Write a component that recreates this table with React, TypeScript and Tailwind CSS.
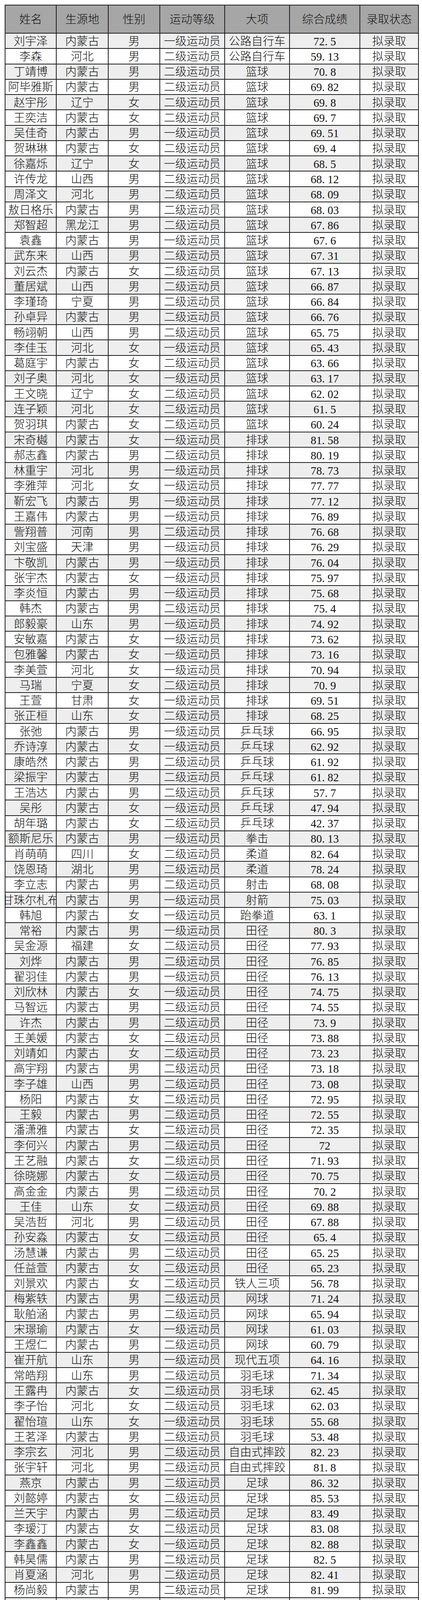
const HEADERS = ['姓名', '生源地', '性别', '运动等级', '大项', '综合成绩', '录取状态'];

// name,origin,gender,level(1/2),event,score
const RAW = `刘宇泽,内蒙古,男,1,公路自行车,72.5
李森,河北,男,2,公路自行车,59.13
丁靖博,内蒙古,男,2,篮球,70.8
阿毕雅斯,内蒙古,男,2,篮球,69.82
赵宇彤,辽宁,女,2,篮球,69.8
王奕洁,内蒙古,女,2,篮球,69.7
吴佳奇,内蒙古,男,1,篮球,69.51
贺琳琳,内蒙古,女,2,篮球,69.4
徐嘉烁,辽宁,女,1,篮球,68.5
许传龙,山西,男,2,篮球,68.12
周泽文,河北,男,2,篮球,68.09
敖日格乐,内蒙古,男,2,篮球,68.03
郑智超,黑龙江,男,2,篮球,67.86
袁鑫,内蒙古,男,1,篮球,67.6
武东来,山西,男,2,篮球,67.31
刘云杰,内蒙古,女,2,篮球,67.13
董居斌,山西,男,2,篮球,66.87
李瑾琦,宁夏,男,2,篮球,66.84
孙卓异,内蒙古,男,2,篮球,66.76
畅翊朝,山西,男,2,篮球,65.75
李佳玉,河北,女,1,篮球,65.43
葛庭宇,内蒙古,女,2,篮球,63.66
刘子奥,河北,女,1,篮球,63.17
王文晓,辽宁,女,2,篮球,62.02
连子颖,河北,女,2,篮球,61.5
贺羽琪,内蒙古,女,2,篮球,60.24
宋奇樾,内蒙古,女,1,排球,81.58
郝志鑫,内蒙古,男,2,排球,80.19
林重宇,河北,男,1,排球,78.73
李雅萍,河北,女,1,排球,77.77
靳宏飞,内蒙古,男,1,排球,77.12
王嘉伟,内蒙古,男,1,排球,76.89
訾翔普,河南,男,2,排球,76.68
刘宝盛,天津,男,1,排球,76.29
卞敬凯,内蒙古,男,1,排球,76.04
张宇杰,内蒙古,女,1,排球,75.97
李炎恒,内蒙古,男,1,排球,75.68
韩杰,内蒙古,男,2,排球,75.4
郎毅豪,山东,男,1,排球,74.92
安敏嘉,内蒙古,女,1,排球,73.62
包雅馨,内蒙古,女,1,排球,73.16
李美萱,河北,女,1,排球,70.94
马瑞,宁夏,女,2,排球,70.9
王萱,甘肃,女,1,排球,69.51
张正桓,山东,女,2,排球,68.25
张弛,内蒙古,男,1,乒乓球,66.95
乔诗淳,内蒙古,女,1,乒乓球,62.92
康皓然,内蒙古,男,2,乒乓球,61.92
梁振宇,内蒙古,男,2,乒乓球,61.82
王浩达,内蒙古,男,2,乒乓球,57.7
吴彤,内蒙古,女,1,乒乓球,47.94
胡年璐,内蒙古,女,2,乒乓球,42.37
额斯尼乐,内蒙古,男,1,拳击,80.13
肖萌萌,四川,女,2,柔道,82.64
饶恩琦,湖北,男,2,柔道,78.24
李立志,内蒙古,男,2,射击,68.08
甘珠尔札布,内蒙古,男,1,射箭,75.03
韩旭,内蒙古,女,1,跆拳道,63.1
常裕,内蒙古,男,1,田径,80.3
吴金源,福建,女,2,田径,77.93
刘烨,内蒙古,男,2,田径,76.85
翟羽佳,内蒙古,男,1,田径,76.13
刘欣林,内蒙古,女,1,田径,74.75
马智远,内蒙古,男,2,田径,74.55
许杰,内蒙古,男,2,田径,73.9
王美媛,内蒙古,女,2,田径,73.88
刘靖如,内蒙古,女,2,田径,73.23
高宇翔,内蒙古,男,2,田径,73.18
李子雄,山西,男,2,田径,73.08
杨阳,内蒙古,女,2,田径,72.95
王毅,内蒙古,男,2,田径,72.55
潘潇雅,内蒙古,女,2,田径,72.35
李何兴,内蒙古,男,2,田径,72
王艺融,内蒙古,女,2,田径,71.93
徐晓娜,内蒙古,女,2,田径,70.75
高金金,内蒙古,男,2,田径,70.2
王佳,山东,女,2,田径,69.88
吴浩哲,河北,男,2,田径,67.88
孙安淼,内蒙古,女,2,田径,65.4
汤慧谦,内蒙古,男,2,田径,65.25
任益萱,内蒙古,女,2,田径,65.23
刘景欢,内蒙古,女,2,铁人三项,56.78
梅紫轶,内蒙古,男,2,网球,71.24
耿舶涵,内蒙古,男,2,网球,65.94
宋璟瑜,内蒙古,女,1,网球,61.03
王煜仁,内蒙古,男,2,网球,60.79
崔开航,山东,男,1,现代五项,64.16
常皓翔,山东,男,2,羽毛球,71.34
王露冉,内蒙古,女,2,羽毛球,62.45
李子怡,河北,女,2,羽毛球,62.03
翟怡瑄,山东,女,1,羽毛球,55.68
王茗泽,内蒙古,男,2,羽毛球,53.48
李宗玄,河北,男,2,自由式摔跤,82.23
张宇轩,河北,男,2,自由式摔跤,81.8
燕京,内蒙古,男,2,足球,86.32
刘懿婷,内蒙古,女,2,足球,85.53
兰天宇,内蒙古,男,2,足球,83.49
李瑷汀,内蒙古,女,2,足球,83.08
李鑫鑫,内蒙古,女,1,足球,82.88
韩昊儒,内蒙古,男,2,足球,82.5
肖夏涵,河北,男,2,足球,82.41
杨尚毅,内蒙古,男,2,足球,81.99
岳鹏辉,内蒙古,女,2,足球,81.25
段欣颖,河北,女,2,足球,81.11
赵博悦,山西,女,2,足球,81.05
富博延,内蒙古,女,2,足球,80.96
付佳乐,内蒙古,女,2,足球,80.93
郭炳君,河北,男,2,足球,80.57
乔晟洋,内蒙古,男,2,足球,80.09
李宛鑫,河南,女,2,足球,79.78
李露露,内蒙古,女,2,足球,79.73
高晤斯,内蒙古,男,2,足球,79.42
刘欣彤,河北,男,2,足球,79.42
朱禹豪,江苏,男,2,足球,79.39
张轩敏,山西,男,2,足球,79.37
苗国伟,内蒙古,男,1,足球,79.3
杨雪,内蒙古,女,2,足球,79.24
杜天博,河南,男,2,足球,79.17
谢雨杰,陕西,男,2,足球,79.02
谢佳荣,江西,男,2,足球,78.94
马德良,甘肃,男,2,足球,78.9
李焕波,内蒙古,男,2,足球,78.73
阚静雯,黑龙江,女,2,足球,78.49
贺瑶,内蒙古,女,2,足球,78.3
高伟,内蒙古,男,2,足球,78.25
车青耘,四川,男,2,足球,78.25
林雨霏,内蒙古,女,2,足球,78.2
杜湘,湖南,女,2,足球,78.07
李昕蓉,山西,女,1,足球,78.02
路子祺,河北,女,2,足球,77.95
陈翰翔,湖南,男,2,足球,77.9
白锁燕,宁夏,女,2,足球,77.77
穆羿池,贵州,男,2,足球,77.72
陈思寒,内蒙古,女,2,足球,77.71
余子璇,安徽,男,2,足球,77.59
吕昊,福建,男,2,足球,77.45
孙陟鼎,河北,男,2,足球,77.45
韩育君,内蒙古,女,2,足球,77.08
何路生,内蒙古,男,2,足球,76.69
徐娜,湖北,女,2,足球,76.55
张凯,内蒙古,男,2,足球,76.53
周昕泽,内蒙古,男,2,足球,76.5
张艺菲,河北,女,1,足球,76.45
王俊峰,山东,男,2,足球,76.44
张洋洋,内蒙古,女,2,足球,76.4
李美玲,河北,女,2,足球,76
李琪,内蒙古,男,2,足球,75.95
蒋昊泽,内蒙古,男,2,足球,75.79
丁浩宸,内蒙古,男,2,足球,75.75
张田硕,湖北,男,2,足球,75.74
刘昊喆,河北,男,2,足球,75.64
李沚霏,内蒙古,女,2,足球,74.96
唐浩,内蒙古,男,2,足球,72.77
李金晶,山西,女,2,足球,72.48
闫家宝,内蒙古,男,2,足球,65.33
黄武炫,吉林,男,2,足球,62.61`;

const rows = RAW.split('\n').map((line) => {
    const [name, origin, gender, level, event, score] = line.split(',');
    return { name, origin, gender, level: level === '1' ? '一级运动员' : '二级运动员', event, score };
});

const cell =
    'flex min-h-0 items-center justify-center overflow-hidden whitespace-nowrap border-r-2 border-b-2 border-[#1e1e1e]';
const grid = 'grid grid-cols-[131px_133px_132px_166px_166px_180px_150px]';

function Score({ value }: { value: string }) {
    const [int, dec] = value.split('.');
    if (dec === undefined) return <span>{int}</span>;
    // the sheet's period takes a full half-width slot
    return (
        <span>
            {int}
            <span className="mr-[7px]">.</span>
            {dec}
        </span>
    );
}

export default function App() {
    return (
        <div className="bg-white pt-[12px] pl-[12px] font-['Liberation_Serif','Noto_Sans_CJK_SC',serif] text-[29px] font-light leading-none text-[#111]">
            <div className="w-[1060px] border-l-2 border-t-2 border-[#1e1e1e]">
                {/* Header */}
                <div className={`${grid} h-[72px] bg-[#a6a6a6]`}>
                    {HEADERS.map((h) => (
                        <div key={h} className={`${cell} pt-[2px]`}>
                            {h}
                        </div>
                    ))}
                </div>

                {/* Rows share the body height evenly (156 rows) */}
                <div className="flex h-[6126px] flex-col">
                    {rows.map((r, i) => (
                        <div
                            key={i}
                            className={`${grid} min-h-0 flex-1 basis-0 overflow-hidden ${i % 2 === 0 ? 'bg-[#eeeeee]' : 'bg-white'}`}
                        >
                            <div className={`${cell} pt-[3px]`}>{r.name}</div>
                            <div className={`${cell} pt-[3px]`}>{r.origin}</div>
                            <div className={`${cell} pt-[3px]`}>{r.gender}</div>
                            <div className={`${cell} pt-[3px]`}>{r.level}</div>
                            <div className={`${cell} pt-[3px]`}>{r.event}</div>
                            <div className={`${cell} pt-[3px]`}>
                                <Score value={r.score} />
                            </div>
                            <div className={`${cell} pt-[3px]`}>拟录取</div>
                        </div>
                    ))}
                </div>
            </div>
        </div>
    );
}
